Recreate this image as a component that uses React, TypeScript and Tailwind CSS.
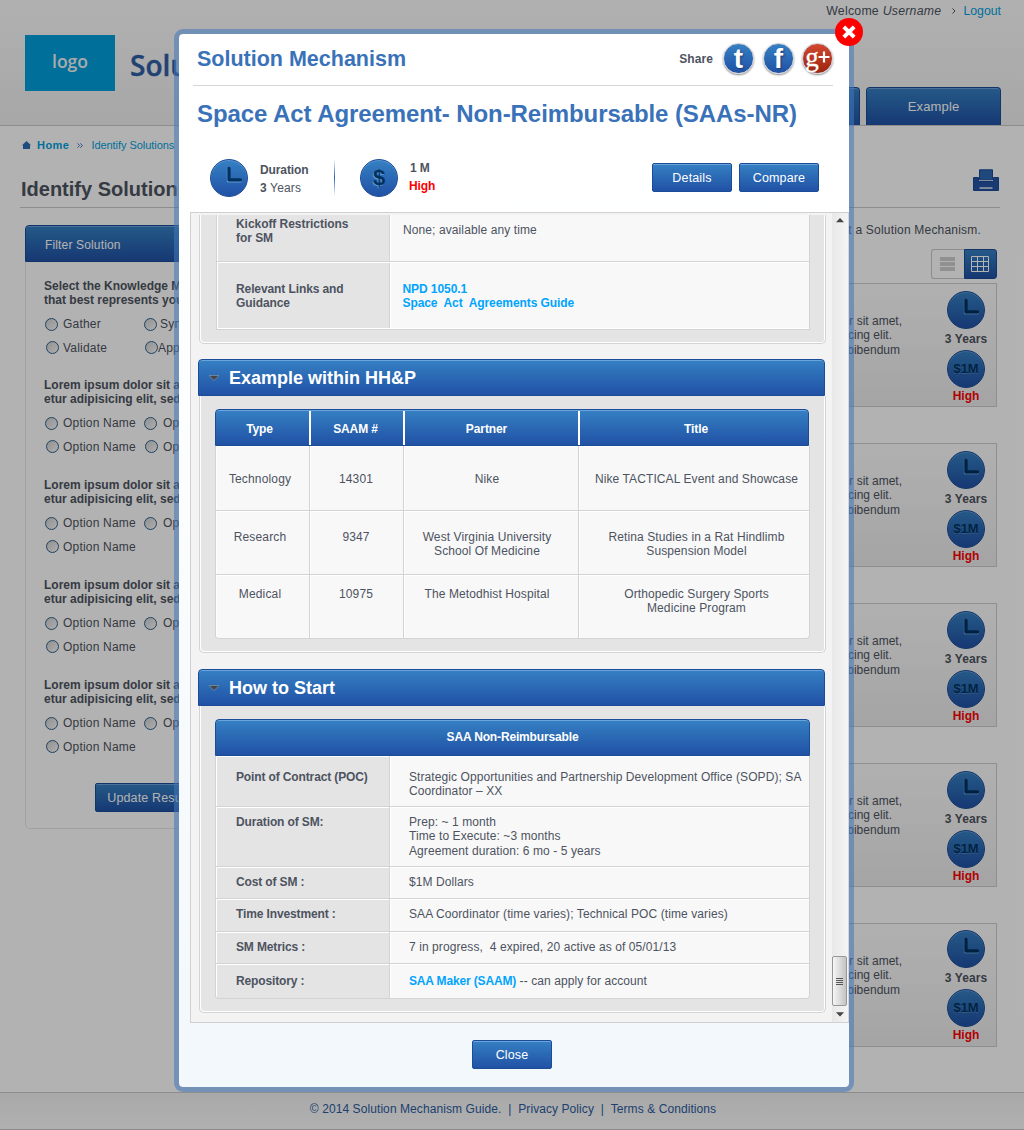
import React from "react";

const FILTERS = [
  { title: ["Lorem ipsum dolor sit amet, consect", "etur adipisicing elit, sed do eiusmod"], four: true },
  { title: ["Lorem ipsum dolor sit amet, consect", "etur adipisicing elit, sed do eiusmod"], four: false },
  { title: ["Lorem ipsum dolor sit amet, consect", "etur adipisicing elit, sed do eiusmod"], four: false },
  { title: ["Lorem ipsum dolor sit amet, consect", "etur adipisicing elit, sed do eiusmod"], four: false },
];

const EXAMPLES = [
  { h: "h-[64px] pt-[26px]", cells: [["Technology"], ["14301"], ["Nike"], ["Nike TACTICAL Event and Showcase"]] },
  { h: "h-[63px] pt-[19px]", cells: [["Research"], ["9347"], ["West Virginia University", "School Of Medicine"], ["Retina Studies in a Rat Hindlimb", "Suspension Model"]] },
  { h: "h-[63px] pt-[12px]", cells: [["Medical"], ["10975"], ["The Metodhist Hospital"], ["Orthopedic Surgery Sports", "Medicine Program"]] },
];

const EXAMPLE_COLUMNS = [
  "w-[93px] pr-[5px] tracking-[0.15px]",
  "w-[94px] border-l border-[#d3d3d3] pr-px",
  "w-[175px] border-l border-[#d3d3d3] pr-[8px]",
  "flex-1 border-l border-[#d3d3d3] pl-[5px]",
];

const START_ROWS: { h: string; label: string; value: React.ReactNode }[] = [
  {
    h: "h-[50px] pt-[14px]",
    label: "Point of Contract (POC)",
    value: (
      <>
        Strategic Opportunities and Partnership Development Office (SOPD); SA
        <br />
        Coordinator – XX
      </>
    ),
  },
  {
    h: "h-[59px] pt-[8px]",
    label: "Duration of SM:",
    value: (
      <>
        Prep: ~ 1 month
        <br />
        Time to Execute: ~3 months
        <br />
        Agreement duration: 6 mo - 5 years
      </>
    ),
  },
  { h: "h-[31px] pt-[8px]", label: "Cost of SM :", value: "$1M Dollars" },
  { h: "h-[32px] pt-[8px]", label: "Time Investment :", value: "SAA Coordinator (time varies); Technical POC (time varies)" },
  { h: "h-[31px] pt-[8px]", label: "SM Metrics :", value: "7 in progress,\u00a0 4 expired, 20 active as of 05/01/13" },
  {
    h: "h-[34px] pt-[10px]",
    label: "Repository :",
    value: (
      <>
        <b className="tracking-[-0.15px] text-[#00a4ff]">SAA Maker (SAAM)</b> -- can apply for account
      </>
    ),
  },
];

function Badge({ children }: { children?: React.ReactNode }) {
  return (
    <div className="flex size-[38px] shrink-0 items-center justify-center rounded-full border border-[#1b4c97] bg-linear-to-b from-[#3680c3] to-[#2151a5] shadow-[inset_0_1px_0_#5b97d6]">
      {children}
    </div>
  );
}

function ClockBadge() {
  return (
    <Badge>
      <svg width="36" height="36" viewBox="0 0 36 36" fill="none" strokeLinecap="round" strokeLinejoin="round">
        <path d="M17.300 9.200v11.800h12" stroke="#5f97d4" strokeWidth="3" />
        <path d="M18 8.400V19.800H29.500" stroke="#00325f" strokeWidth="3.200" />
      </svg>
    </Badge>
  );
}

function Radio({ label, className = "" }: { label: string; className?: string }) {
  return (
    <span className={"flex items-center tracking-[0.2px] whitespace-nowrap " + className}>
      <span className="mr-[5px] size-[13px] shrink-0 rounded-full border border-[#2d5f8c] bg-linear-to-br from-[#d0d0d0] to-[#fafafa]" />
      {label}
    </span>
  );
}

function Button({ children, className = "" }: { children: React.ReactNode; className?: string }) {
  return (
    <button
      className={
        "flex h-[29px] items-center justify-center rounded-[2px] border border-[#1b4c97] bg-linear-to-b from-[#3680c3] to-[#2151a5] pt-[2px] text-[12.5px] tracking-[0.15px] text-white shadow-[inset_0_1px_0_#6ba3dd] " +
        className
      }
    >
      {children}
    </button>
  );
}

function Section({ title, children, className }: { title: string; children: React.ReactNode; className: string }) {
  return (
    <section className={className}>
      <h3 className="flex h-[37px] w-[627px] items-center rounded-t-[4px] border border-[#1b4c97] bg-linear-to-b from-[#3680c3] to-[#2151a5] pt-px pl-[10px] text-[18px] font-bold text-white shadow-[inset_0_1px_0_#6ba3dd]">
        <svg width="10" height="6" viewBox="0 0 10 6" className="mr-[10px]">
          <path d="M0 .5h10L5 5.6z" fill="#454545" stroke="#8ea2b8" strokeWidth=".6" />
        </svg>
        {title}
      </h3>
      <div className="ml-px rounded-b-[5px] border border-t-0 border-[#d3d3d3] bg-[#e4e4e4] px-[15px] pt-[13px] shadow-[inset_1px_-1px_0_#fff,inset_-1px_0_0_#fff]">
        {children}
      </div>
    </section>
  );
}

function SolutionCard({ last }: { last: boolean }) {
  return (
    <article className="mb-9 flex h-[124px] justify-end border border-[#cdcdcd] bg-linear-to-b from-[#fdfdfd] to-[#ececec]">
      <div className="flex flex-col items-end pt-[30px] text-right leading-[14.4px] whitespace-nowrap">
        <span>Lorem ipsum dolor sit amet,</span>
        <span className="pr-[10px]">consectetur adipiscing elit.</span>
        <span className="pr-[2px]">Vestibulum bibendum</span>
      </div>
      <div className={"mr-[5px] ml-[19px] flex w-[70px] flex-col items-center pl-[20px] whitespace-nowrap " + (last ? "pt-[6px]" : "pt-[7px]")}>
        <ClockBadge />
        <b className="mt-[3px] leading-[14px] tracking-[0.1px]">3 Years</b>
        <span className="mt-[4px] block">
          <Badge>
            <b className="text-[13px] tracking-[-0.1px] text-[#00325f] [text-shadow:0_1px_0_#4a84c4]">$1M</b>
          </Badge>
        </span>
        <b className="mt-px leading-[14px] text-[#f00]">High</b>
      </div>
    </article>
  );
}

function BackgroundPage() {
  return (
    <div className="flex h-[1130px] flex-col">
      <header className="flex h-[126px] justify-between border-b border-[#cbcbcb] bg-linear-to-b from-[#fdfdfd] to-[#f0f0f0] pl-[25px]">
        <div className="flex pt-[35px]">
          <div className="flex h-[56px] w-[90px] items-center justify-center bg-[#009fdd] pb-1 font-['Open_Sans'] text-[17.5px] font-semibold text-[#f4f4f4]">
            logo
          </div>
          <div className="ml-[15px] pt-[11px] font-['Open_Sans'] text-[28px] leading-[38px] font-semibold whitespace-nowrap text-[#2f5fa5] [-webkit-text-stroke:0.4px_#2f5fa5]">
            Solution
          </div>
        </div>
        <div className="flex flex-col items-end justify-between pr-[23px]">
          <div className="flex pt-[3px] text-[12.3px] leading-4">
            <span className="tracking-[0.25px]">
              Welcome&nbsp;<i>Username</i>
            </span>
            <svg width="4" height="6" viewBox="0 0 4 6" className="mt-[5px] mr-[7px] ml-[11px]" fill="none" stroke="#4d5360">
              <path d="M.5.5L3 3 .5 5.500" />
            </svg>
            <span className="text-[#009fe0]">Logout</span>
          </div>
          <nav className="flex gap-[6px] text-[13px] tracking-[0.15px] text-white">
            {["Example", "Example"].map((t, i) => (
              <span
                key={i}
                className="flex h-[38px] w-[135px] items-center justify-center rounded-t-[4px] border border-b-0 border-[#1b4c97] bg-linear-to-b from-[#3680c3] to-[#2151a5] shadow-[inset_0_1px_0_#6ba3dd]"
              >
                {t}
              </span>
            ))}
          </nav>
        </div>
      </header>

      <div className="mt-[12px] flex h-[15px] items-center pl-[22px] text-[11px] text-[#009fe0]">
        <svg width="9" height="8" viewBox="0 0 9 8" className="mr-[6px] mb-px">
          <path d="M4.5 0L9 4.3H8V8H1V4.3H0z" fill="#2f6cb5" />
        </svg>
        <b className="tracking-[0.45px]">Home</b>
        <svg width="6" height="5" viewBox="0 0 6 5" className="mx-[8px]" fill="none" stroke="#2f6cb5" strokeWidth=".9">
          <path d="M.5.3l2.200 2.200L.5 4.700M3.300.3l2.200 2.200L3.300 4.700" />
        </svg>
        <span className="tracking-[-0.05px]">Identify Solutions</span>
      </div>

      <div className="mt-[12px] mr-6 ml-5 flex h-[43px] items-start justify-between border-b border-[#cbcbcb]">
        <h1 className="mt-[12px] ml-px text-[20px] leading-6 font-bold">Identify Solutions</h1>
        <svg width="26" height="23" viewBox="0 0 26 23" className="mt-[4px] mr-[1px]">
          <path d="M.5 8.500h5v4h15v-4h5v13H.5z" fill="#2454a5" stroke="#1b4c97" />
          <path d="M6.500.8h13v10h-13z" fill="#2d69b2" stroke="#1b4c97" />
          <path d="M6.500 19h13" stroke="#fff" strokeWidth="1.300" />
        </svg>
      </div>

      <main className="flex flex-1 items-start justify-between pr-[27px] pl-[25px]">
        <aside className="mt-[17px] w-[225px]">
          <h2 className="flex h-[37px] items-center rounded-t-[4px] border border-[#1b4c97] bg-linear-to-b from-[#3680c3] to-[#2151a5] pt-[2px] pl-[19px] text-[12px] tracking-[0.15px] text-white shadow-[inset_0_1px_0_#6ba3dd]">
            Filter Solution
          </h2>
          <div className="h-[567px] rounded-b-[5px] border border-t-0 border-[#e6e6e6] pt-[17px] pl-[18px]">
            <div className="h-[99px] leading-[14.2px]">
              <b className="block whitespace-nowrap">
                Select the Knowledge Management
                <br />
                that best represents your need
              </b>
              <div className="mt-[10px] flex pl-px">
                <Radio label="Gather" className="w-[99px]" />
                <Radio label="Synthesize" className="[&>span]:mr-[3px]" />
              </div>
              <div className="mt-[9px] flex pl-[2px]">
                <Radio label="Validate" className="w-[99px] [&>span]:mr-[4px]" />
                <Radio label="Apply" className="[&>span]:mr-0" />
              </div>
            </div>
            {FILTERS.map((f, i) => (
              <div key={i} className="h-[100px] leading-[14.2px]">
                <b className="block whitespace-nowrap">
                  {f.title[0]}
                  <br />
                  {f.title[1]}
                </b>
                <div className="mt-[10px] flex pl-px">
                  <Radio label="Option Name" className="w-[99px]" />
                  <Radio label="Option Name" className="[&>span]:mr-[6px]" />
                </div>
                <div className="mt-[9px] flex pl-[2px]">
                  <Radio label="Option Name" className="w-[99px] [&>span]:mr-[4px]" />
                  {f.four && <Radio label="Option Name" />}
                </div>
              </div>
            ))}
            <Button className="mt-[5px] ml-[51px] w-[112px]">Update Results</Button>
          </div>
        </aside>

        <div className="w-[730px]">
          <p className="mt-[15px] mr-[16px] text-right leading-[15px] tracking-[0.2px]">Use the filter to select a Solution Mechanism.</p>
          <div className="mt-[11px] mb-[4px] flex justify-end">
            <span className="flex h-[30px] w-[33px] items-center justify-center rounded-l-[3px] border border-r-0 border-[#cbcbcb] pr-px">
              <svg width="15" height="15" viewBox="0 0 15 15" fill="#cfcfcf">
                <path d="M0 0h15v4H0zM0 5h15v4H0zM0 10h15v4H0z" />
              </svg>
            </span>
            <span className="flex h-[30px] w-[33px] items-center justify-center rounded-r-[3px] border border-[#1b4c97] bg-linear-to-b from-[#3680c3] to-[#2151a5] pr-px">
              <svg width="18" height="16" viewBox="0 0 18 16" fill="none" stroke="#fff">
                <path d="M.5.5h17v15H.5zM.5 5.500h17M.5 10.500h17M6.500.5v15M12.500.5v15" />
              </svg>
            </span>
          </div>
          {[0, 1, 2, 3, 4].map((i) => (
            <SolutionCard key={i} last={i === 4} />
          ))}
        </div>
      </main>

      <footer className="flex h-[38px] items-center justify-center border-y border-[#cbcbcb] bg-linear-to-b from-[#f2f2f2] to-[#fdfdfd] pb-[5px] pl-[2px] text-[12px] tracking-[0.08px] text-[#2c5c9f]">
        © 2014 Solution Mechanism Guide.&nbsp; |&nbsp; Privacy Policy&nbsp; |&nbsp; Terms &amp; Conditions
      </footer>
    </div>
  );
}

function ModalHeader() {
  return (
    <>
      <div className="mr-4 ml-[14px] flex h-[52px] justify-between border-b border-[#d6d6d6]">
        <h2 className="mt-[12px] ml-1 text-[21.5px] leading-[26px] font-bold text-[#3a72b9]">Solution Mechanism</h2>
        <div className="flex items-start pt-[9px]">
          <b className="mt-[9px] mr-[10px] text-[12px] leading-[14px] tracking-[0.1px]">Share</b>
          <span className="mr-[9px] flex size-[31px] items-center justify-center rounded-full border border-[#c8ccd2] bg-linear-to-b from-[#3680c3] to-[#2151a5] text-[28px] leading-none font-bold text-white shadow-[0_1px_2px_#888] [text-shadow:1px_1px_2px_#1b3c77]">
            t
          </span>
          <span className="mr-[8px] flex size-[31px] items-center justify-center rounded-full border border-[#c8ccd2] bg-linear-to-b from-[#3680c3] to-[#2151a5] text-[28px] leading-none font-bold text-white shadow-[0_1px_2px_#888] [text-shadow:1px_1px_2px_#1b3c77]">
            f
          </span>
          <span className="flex size-[31px] items-center justify-center rounded-full border border-[#c8ccd2] bg-linear-to-b from-[#d3472f] to-[#9c2410] shadow-[0_1px_2px_#888]">
            <span className="-mt-[4px] font-['Liberation_Serif'] text-[27px] leading-[28px] text-white [-webkit-text-stroke:0.3px_white]">g</span>
            <svg width="12" height="12" viewBox="0 0 12 12" className="-mt-[3px] -ml-px" stroke="#fff" strokeWidth="2.200">
              <path d="M6 .5v11M.5 6h11" />
            </svg>
          </span>
        </div>
      </div>
      <h1 className="mt-[14px] ml-[18px] text-[24px] leading-[28px] font-bold tracking-[-0.08px] whitespace-nowrap text-[#3a72b9]">
        Space Act Agreement- Non-Reimbursable (SAAs-NR)
      </h1>
      <div className="mt-[31px] ml-[31px] flex h-[53px] items-start">
        <ClockBadge />
        <div className="mt-[2px] ml-[12px] w-[74px] leading-[18px]">
          <b className="tracking-[-0.1px]">Duration</b>
          <br />
          <span className="tracking-[0.15px]">
            <b>3</b> Years
          </span>
        </div>
        <div className="mr-[25px] h-[37px] w-px bg-linear-to-b from-white via-[#2a63b0] to-white" />
        <Badge>
          <b className="text-[22px] leading-none text-[#00325f] [text-shadow:-1px_1px_0_#5f97d4]">$</b>
        </Badge>
        <div className="ml-[12px] w-[242px] leading-[18px] font-bold tracking-[-0.1px]">
          1 M
          <br />
          <span className="-ml-px text-[#f00]">High</span>
        </div>
        <Button className="mt-[4px] w-[80px]">Details</Button>
        <Button className="mt-[4px] ml-[7px] w-[80px]">Compare</Button>
      </div>
    </>
  );
}

function KickoffTable() {
  return (
    <div className="ml-px rounded-b-[5px] border border-t-0 border-[#d3d3d3] bg-[#e4e4e4] pr-[15px] pb-[13px] pl-4 shadow-[inset_1px_-1px_0_#fff,inset_-1px_0_0_#fff]">
      <div className="border border-t-0 border-[#d3d3d3] leading-[14.2px] shadow-[inset_1px_-1px_0_#fff]">
        <div className="flex h-[47px] border-b border-[#d3d3d3]">
          <b className="w-[172px] pt-[2px] pl-[19px] tracking-[-0.05px]">
            Kickoff Restrictions
            <br />
            for SM
          </b>
          <div className="flex-1 border-l border-[#d3d3d3] bg-[#f8f8f8] pt-[8px] pl-[13px] tracking-[0.1px] shadow-[inset_1px_0_0_#fff]">
            None; available any time
          </div>
        </div>
        <div className="flex h-[67px] border-y border-white">
          <b className="w-[172px] pt-[19px] pl-[19px] tracking-[-0.1px]">
            Relevant Links and
            <br />
            Guidance
          </b>
          <b className="flex-1 border-l border-[#d3d3d3] bg-[#f8f8f8] pt-[19px] pl-[12.5px] tracking-[-0.08px] text-[#00a4ff] shadow-[inset_1px_0_0_#fff]">
            NPD 1050.1
            <br />
            Space&nbsp; Act&nbsp; Agreements Guide
          </b>
        </div>
      </div>
    </div>
  );
}

function ExampleTable() {
  return (
    <>
      <div className="flex h-[37px] w-[594px] overflow-hidden rounded-t-[4px] border border-[#1b4c97] bg-linear-to-b from-[#3680c3] to-[#2151a5] text-center leading-[36px] font-bold tracking-[-0.1px] text-white shadow-[inset_0_1px_0_#6ba3dd]">
        <span className="mt-px w-[93px] pr-[6px]">Type</span>
        <span className="mt-px w-[94px] border-l-2 border-white pr-[3px]">SAAM #</span>
        <span className="mt-px w-[175px] border-l-2 border-white pr-[10px]">Partner</span>
        <span className="mt-px flex-1 border-l-2 border-white pl-[4px]">Title</span>
      </div>
      <div className="mb-[13px] w-[595px] overflow-hidden rounded-b-[4px] border border-t-0 border-[#d3d3d3] bg-[#f8f8f8] leading-[14.4px] tracking-[0.1px]">
        {EXAMPLES.map((row, r) => (
          <div key={r} className={r ? "flex border-t border-[#d3d3d3]" : "flex"}>
            {row.cells.map((cell, c) => (
              <div key={c} className={"text-center whitespace-nowrap shadow-[inset_1px_1px_0_#fff] " + row.h + " " + EXAMPLE_COLUMNS[c]}>
                {cell.map((line) => (
                  <div key={line}>{line}</div>
                ))}
              </div>
            ))}
          </div>
        ))}
      </div>
    </>
  );
}

function StartTable() {
  return (
    <>
      <div className="flex h-[37px] w-[595px] items-center justify-center rounded-t-[4px] border border-[#1b4c97] bg-linear-to-b from-[#3680c3] to-[#2151a5] pb-px font-bold tracking-[-0.15px] text-white shadow-[inset_0_1px_0_#6ba3dd]">
        SAA Non-Reimbursable
      </div>
      <div className="mb-[13px] w-[595px] overflow-hidden rounded-b-[4px] border border-t-0 border-[#d3d3d3] leading-[14.4px]">
        {START_ROWS.map((row, i) => (
          <div key={row.label} className={i ? "flex border-t border-[#d3d3d3]" : "flex"}>
            <div className={"w-[173px] bg-[#e4e4e4] pl-5 font-bold tracking-[-0.13px] shadow-[inset_1px_1px_0_#fff] " + row.h}>{row.label}</div>
            <div className={"flex-1 border-l border-[#d3d3d3] bg-[#f8f8f8] pl-[19px] tracking-[0.085px] whitespace-nowrap shadow-[inset_1px_1px_0_#fff] " + row.h}>
              {row.value}
            </div>
          </div>
        ))}
      </div>
    </>
  );
}

function Scrollbar() {
  return (
    <div className="flex w-[17px] flex-col items-center border-r border-[#d6d6d6] bg-linear-to-r from-[#e8e8e8] to-[#f4f4f4]">
      <svg width="8" height="5" viewBox="0 0 8 5" className="mt-[5px]">
        <path d="M4 0l4 4.200H0z" fill="#444" />
      </svg>
      <div className="mt-[733px] mr-px flex h-[50px] w-[15px] flex-col items-center justify-center gap-[1px] rounded-[2px] border border-[#979797] bg-linear-to-r from-[#f5f5f5] to-[#c4c4c6]">
        {[0, 1, 2, 3].map((i) => (
          <span key={i} className="h-px w-[7px] bg-[#555]" />
        ))}
      </div>
      <svg width="8" height="5" viewBox="0 0 8 5" className="mt-[6px]">
        <path d="M4 4.500L0 .3h8z" fill="#444" />
      </svg>
    </div>
  );
}

function Modal() {
  return (
    <div className="absolute top-[29px] left-[174px] h-[1063px] w-[680px] rounded-[9px] border-[5px] border-[rgba(65,120,189,0.55)] bg-linear-to-b from-white from-10% to-[#f3f8fc] bg-clip-padding">
      <ModalHeader />
      <div className="ml-[11px] flex h-[811px] justify-between border border-r-0 border-[#d0d0d0] bg-[#f3f3f3]">
        <div className="h-[809px] w-[635px] overflow-hidden pt-[2px] pl-[7px]">
          <div className="w-[628px]">
            <KickoffTable />
            <Section title="Example within HH&P" className="mt-[15px]">
              <ExampleTable />
            </Section>
            <Section title="How to Start" className="mt-[16px]">
              <StartTable />
            </Section>
          </div>
        </div>
        <Scrollbar />
      </div>
      <Button className="mt-[17px] ml-[293px] w-[80px]">Close</Button>
      <button className="absolute -top-[16px] -right-[14px] flex size-[28px] items-center justify-center rounded-full bg-[#f00]">
        <svg width="14" height="14" viewBox="0 0 14 14" stroke="#fff" strokeWidth="4">
          <path d="M1.800 1.800l10.400 10.400M12.200 1.800L1.800 12.200" />
        </svg>
      </button>
    </div>
  );
}

export default function App() {
  return (
    <div className="relative h-[1130px] w-[1024px] overflow-hidden bg-white font-['Liberation_Sans',Arial,sans-serif] text-[12px] text-[#4d5360]">
      <BackgroundPage />
      <div className="absolute inset-0 bg-black/30" />
      <Modal />
    </div>
  );
}
